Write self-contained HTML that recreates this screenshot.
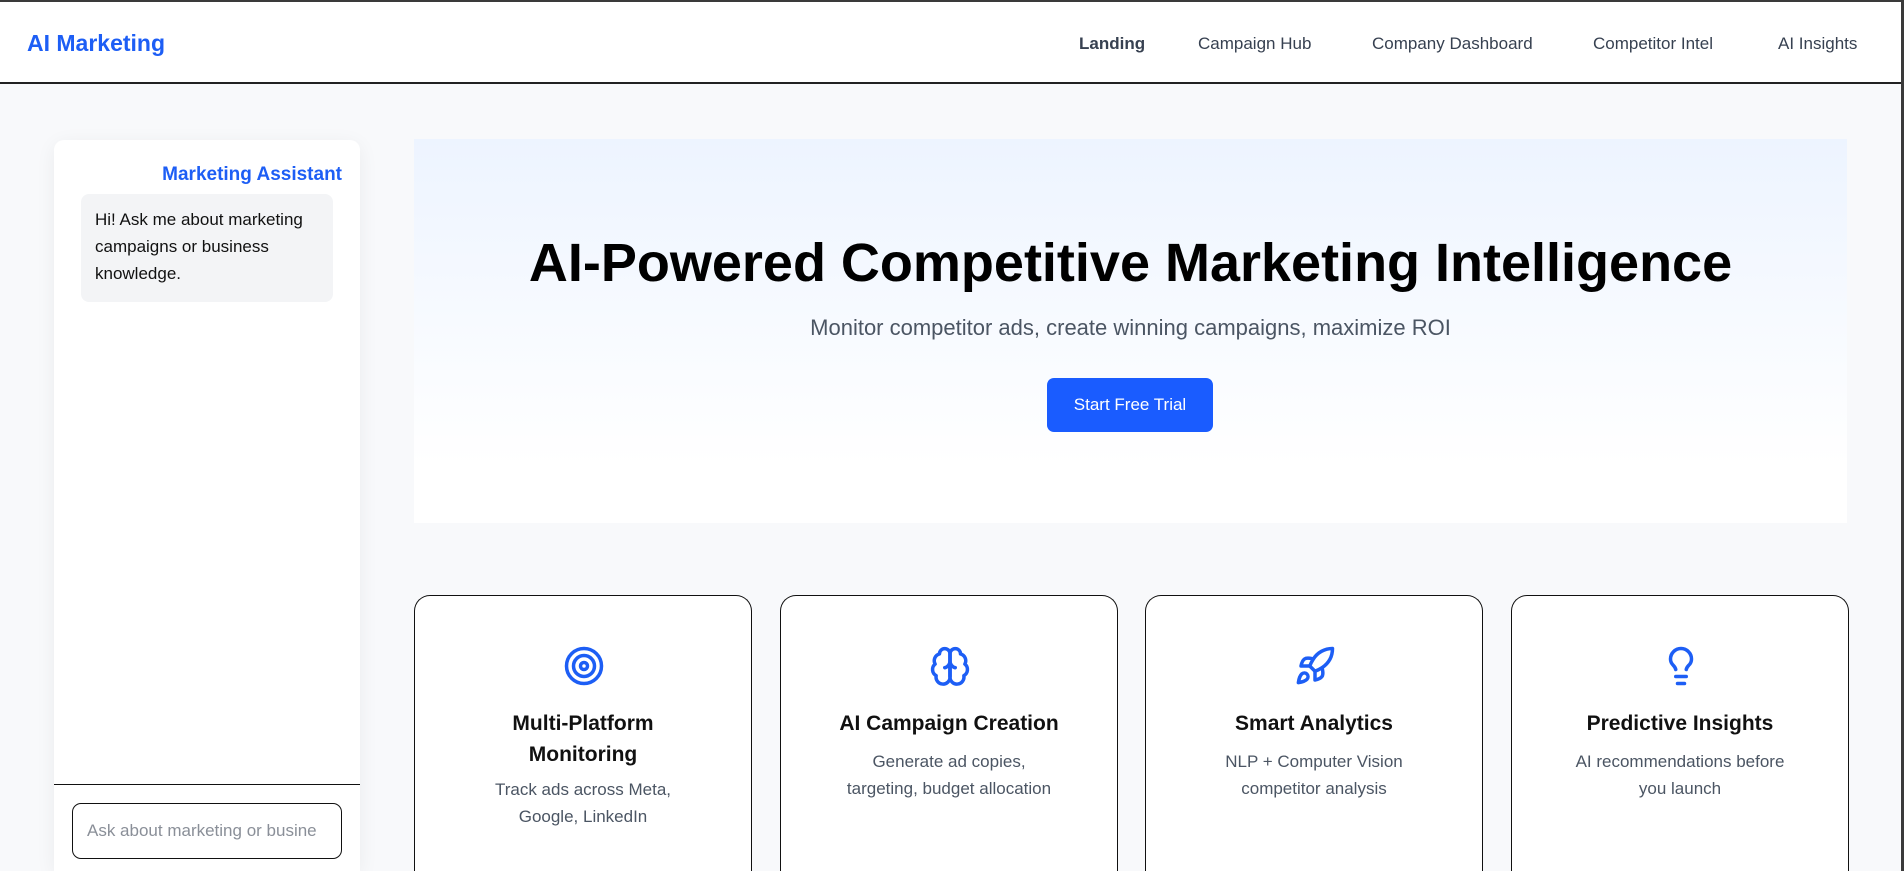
<!DOCTYPE html>
<html><head><meta charset="utf-8"><style>
*{box-sizing:border-box;margin:0;padding:0}
html,body{width:1904px;height:871px;overflow:hidden}
body{background:#f8f9fb;font-family:"Liberation Sans","DejaVu Sans",sans-serif}
.wrap{position:relative;width:1904px;height:871px;overflow:hidden;border-top:2px solid #3a3a3a;border-right:3px solid #3a3a3a}
.nav{position:absolute;left:0;top:0;width:1901px;height:82px;background:#fff;border-bottom:2px solid #222}
.logo{position:absolute;left:27px;top:28px;font-size:23px;font-weight:bold;color:#1d5ef5}
.nav a{position:absolute;top:32px;font-size:17px;color:#374151;text-decoration:none;white-space:nowrap}
.side{position:absolute;left:54px;top:138px;width:306px;height:731px;background:#fff;border-radius:10px 10px 0 0;box-shadow:0 4px 20px rgba(0,0,0,.06)}
.side h3{position:absolute;right:18px;top:24px;font-size:19px;font-weight:bold;color:#1d5ef5}
.bubble{position:absolute;left:27px;top:54px;width:252px;height:108px;background:#f3f4f6;border-radius:8px;padding:12px 14px;font-size:17px;line-height:27px;color:#111}
.div{position:absolute;left:0;top:644px;width:306px;border-top:1.5px solid #111}
.inp{position:absolute;left:18px;top:663px;width:270px;height:56px;border:1.5px solid #111;border-radius:9px;padding:0 14px;font-size:17px;line-height:53px;color:#8a8f98;white-space:nowrap;overflow:hidden}
.hero{position:absolute;left:414px;top:137px;width:1433px;height:384px;background:linear-gradient(#edf4ff,#fff 85%);text-align:center}
.hero h1{position:absolute;left:0;right:0;top:93px;font-size:54px;font-weight:bold;color:#000}
.hero p{position:absolute;left:0;right:0;top:176px;font-size:22px;color:#4b5563}
.btn{position:absolute;left:633px;top:239px;width:166px;height:54px;background:#1a5cff;color:#fff;border-radius:7px;font-size:17px;line-height:54px}
.card{position:absolute;top:593px;width:338px;height:276px;border:1.5px solid #111;border-bottom:none;border-radius:16px 16px 0 0;background:#fff;text-align:center}
.card svg{position:absolute;left:148px;top:49px}
.card h4{position:absolute;left:20px;right:20px;top:112px;font-size:21px;font-weight:bold;line-height:31px;color:#111}
.card p{position:absolute;left:30px;right:30px;font-size:17px;line-height:27px;color:#4b5563}
</style></head><body><div class="wrap">
<div class="nav">
<div class="logo">AI Marketing</div>
<a style="left:1079px;font-weight:bold">Landing</a>
<a style="left:1198px">Campaign Hub</a>
<a style="left:1372px">Company Dashboard</a>
<a style="left:1593px">Competitor Intel</a>
<a style="left:1778px">AI Insights</a>
</div>
<div class="side">
<h3>Marketing Assistant</h3>
<div class="bubble">Hi! Ask me about marketing campaigns or business knowledge.</div>
<div class="div"></div>
<div class="inp">Ask about marketing or busine</div>
</div>
<div class="hero">
<h1>AI-Powered Competitive Marketing Intelligence</h1>
<p>Monitor competitor ads, create winning campaigns, maximize ROI</p>
<div class="btn">Start Free Trial</div>
</div>
<div class="card" style="left:414px">
<svg width="42" height="42" viewBox="0 0 24 24" fill="none" stroke="#1d5ef5" stroke-width="2"><circle cx="12" cy="12" r="10"/><circle cx="12" cy="12" r="6"/><circle cx="12" cy="12" r="2"/></svg>
<h4>Multi-Platform<br>Monitoring</h4>
<p style="top:180px">Track ads across Meta,<br>Google, LinkedIn</p>
</div>
<div class="card" style="left:780px">
<svg width="42" height="42" viewBox="0 0 24 24" fill="none" stroke="#1d5ef5" stroke-width="2" stroke-linecap="round" stroke-linejoin="round"><path d="M12 5a3 3 0 1 0-6 .1 4 4 0 0 0-2.5 5.8 4 4 0 0 0 .6 6.6A4 4 0 1 0 12 18Z"/><path d="M12 5a3 3 0 1 1 6 .1 4 4 0 0 1 2.5 5.8 4 4 0 0 1-.6 6.6A4 4 0 1 1 12 18Z"/><path d="M12 5v13M9 13a4 4 0 0 0 3-4 4 4 0 0 0 3 4"/></svg>
<h4>AI Campaign Creation</h4>
<p style="top:152px">Generate ad copies,<br>targeting, budget allocation</p>
</div>
<div class="card" style="left:1145px">
<svg width="42" height="42" viewBox="0 0 24 24" fill="none" stroke="#1d5ef5" stroke-width="2" stroke-linecap="round" stroke-linejoin="round"><path d="M4.5 16.5c-1.5 1.3-2 5-2 5s3.7-.5 5-2c.7-.8.7-2.1-.1-2.9a2.2 2.2 0 0 0-2.9-.1z"/><path d="m12 15-3-3a22 22 0 0 1 2-3.9A12.9 12.9 0 0 1 22 2c0 2.7-.8 7.5-6 11a22 22 0 0 1-4 2z"/><path d="M9 12H4s.6-3 2-4c1.6-1.1 5 0 5 0M12 15v5s3-.6 4-2c1.1-1.6 0-5 0-5"/></svg>
<h4>Smart Analytics</h4>
<p style="top:152px">NLP + Computer Vision<br>competitor analysis</p>
</div>
<div class="card" style="left:1511px">
<svg width="42" height="42" viewBox="0 0 24 24" fill="none" stroke="#1d5ef5" stroke-width="2" stroke-linecap="round" stroke-linejoin="round"><path d="M15 14c.2-1 .7-1.7 1.5-2.5 1-.9 1.5-2.2 1.5-3.5A6 6 0 0 0 6 8c0 1 .2 2.2 1.5 3.5.7.7 1.3 1.5 1.5 2.5"/><path d="M9 18h6M10 22h4"/></svg>
<h4>Predictive Insights</h4>
<p style="top:152px">AI recommendations before<br>you launch</p>
</div>
</div></body></html>
